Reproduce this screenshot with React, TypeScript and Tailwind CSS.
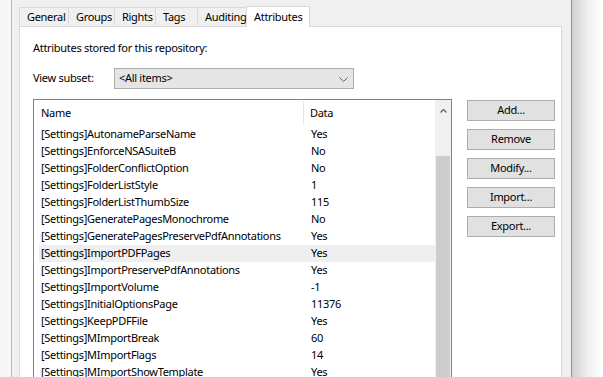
import React from "react";

const tabs = [
  { label: "General", w: "w-[50px]" },
  { label: "Groups", w: "w-[47px]" },
  { label: "Rights", w: "w-[42px]" },
  { label: "Tags", w: "w-[43px]" },
  { label: "Auditing", w: "w-[50px]" },
];

const rows: [string, string][] = [
  ["[Settings]AutonameParseName", "Yes"],
  ["[Settings]EnforceNSASuiteB", "No"],
  ["[Settings]FolderConflictOption", "No"],
  ["[Settings]FolderListStyle", "1"],
  ["[Settings]FolderListThumbSize", "115"],
  ["[Settings]GeneratePagesMonochrome", "No"],
  ["[Settings]GeneratePagesPreservePdfAnnotations", "Yes"],
  ["[Settings]ImportPDFPages", "Yes"],
  ["[Settings]ImportPreservePdfAnnotations", "Yes"],
  ["[Settings]ImportVolume", "-1"],
  ["[Settings]InitialOptionsPage", "11376"],
  ["[Settings]KeepPDFFile", "Yes"],
  ["[Settings]MImportBreak", "60"],
  ["[Settings]MImportFlags", "14"],
  ["[Settings]MImportShowTemplate", "Yes"],
];

const buttons = ["Add...", "Remove", "Modify...", "Import...", "Export..."];

export default function App() {
  return (
    <div
      className="flex w-[603px] h-[377px] overflow-hidden text-[11px] tracking-[-0.3px] text-black bg-white"
      style={{ fontFamily: '"Noto Sans", "Liberation Sans", sans-serif' }}
    >
      <div className="w-[12px] shrink-0 bg-[#f7f7f7] border-r border-[#bcbcbc]" />
      <div className="w-[559px] shrink-0 bg-[#f0f0f0] pl-[7px] pr-[9px] pt-[6px] flex flex-col">
        {/* tab strip */}
        <div className="flex items-end h-[21px] relative z-10">
          {tabs.map((t) => (
            <div
              key={t.label}
              className={`${t.w} h-[18px] mb-px border border-b-0 border-[#d9d9d9] -mr-px flex items-center pl-[7px] leading-none`}
            >
              {t.label}
            </div>
          ))}
          <div className="w-[64px] h-[21px] bg-white border border-b-0 border-[#d9d9d9] flex items-start pt-[4px] pl-[7px] leading-none -mb-px">
            Attributes
          </div>
        </div>
        {/* panel */}
        <div className="flex-1 bg-white border border-[#d9d9d9] pl-[13px] pt-[13px]">
          <div className="leading-[16px]">Attributes stored for this repository:</div>
          <div className="flex items-center mt-[12px] h-[21px]">
            <div className="w-[81px]">View subset:</div>
            <div className="w-[240px] h-[21px] bg-[#e5e5e5] border border-[#adadad] flex items-center justify-between pl-[4px] pr-[5px]">
              <span>&lt;All items&gt;</span>
              <svg width="9" height="5" viewBox="0 0 9 5" className="mt-px">
                <path d="M0.5 0.5 L4.5 4.5 L8.5 0.5" fill="none" stroke="#606060" strokeWidth="1" />
              </svg>
            </div>
          </div>
          <div className="flex mt-[10px] gap-[15px]">
            {/* list view */}
            <div className="w-[419px] h-[400px] border border-[#828282] flex">
              <div className="flex-1 pl-[5px]">
                <div className="flex h-[26px] items-center">
                  <div className="w-[265px] pl-[2px] h-[24px] flex items-center border-r border-[#e5e5e5]">Name</div>
                  <div className="pl-[6px]">Data</div>
                </div>
                {rows.map(([n, d], i) => (
                  <div
                    key={n}
                    className={`flex h-[17px] items-center ${i === 7 ? "bg-[#efefef]" : ""}`}
                  >
                    <div className="w-[266px] pl-[2px] whitespace-nowrap">{n}</div>
                    <div className="pl-[6px]">{d}</div>
                  </div>
                ))}
              </div>
              <div className="w-[16px] bg-[#f0f0f0] flex flex-col">
                <div className="h-[17px] mt-[2px] flex items-center justify-center">
                  <svg width="7" height="4" viewBox="0 0 7 4">
                    <path d="M0.5 3.5 L3.5 0.5 L6.5 3.5" fill="none" stroke="#606060" strokeWidth="1.2" />
                  </svg>
                </div>
                <div className="mt-[37px] mx-px flex-1 bg-[#cdcdcd]" />
              </div>
            </div>
            {/* buttons */}
            <div className="flex flex-col gap-[8px] pt-px">
              {buttons.map((b) => (
                <div
                  key={b}
                  className="w-[88px] h-[21px] bg-[#e1e1e1] border border-[#adadad] flex items-center justify-center"
                >
                  {b}
                </div>
              ))}
            </div>
          </div>
        </div>
      </div>
      <div className="w-px shrink-0 bg-[#8f8f8f]" />
      <div className="flex-1 bg-gradient-to-r from-[#cfcfcf] via-[#efefef] to-white" />
    </div>
  );
}
